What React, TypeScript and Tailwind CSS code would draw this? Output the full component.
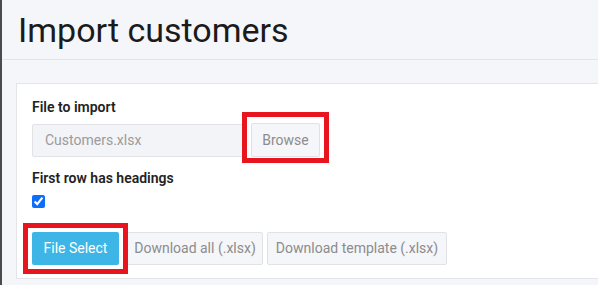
import React, { useState } from "react";

const Marked: React.FC<{
  children: React.ReactNode;
  className?: string;
  frame?: string;
}> = ({ children, className = "", frame = "-top-[9px] -bottom-[9px]" }) => (
  <div className={`relative ${className}`}>
    {children}
    {/* red annotation frame */}
    <div
      className={`pointer-events-none absolute border-[5px] border-[#e8141e] -left-[9px] -right-[9px] ${frame}`}
    />
  </div>
);

const App: React.FC = () => {
  const [headings, setHeadings] = useState(true);

  return (
    <div
      className="flex h-[285px] w-[602px] overflow-hidden bg-white"
      style={{ fontFamily: "Roboto, 'Liberation Sans', sans-serif" }}
    >
      <div className="w-[2px] shrink-0 bg-[#4b4b4b]" />
      <div className="flex w-[596px] flex-col bg-[#f5f6fa]">
        <div className="h-[60px] shrink-0 border-b border-[#e3e4e8] pl-[16px] pt-[8px]">
          <h1 className="text-[34px] leading-[44px] text-[#1b1b1b]">Import customers</h1>
        </div>

        <div className="pl-[14px] pt-[23px]">
          <div className="h-[196px] border border-r-0 border-[#e4e5e9] bg-white pl-[15px] pt-[13px]">
            <label className="block text-[14px] font-semibold leading-[20px] text-[#222]">
              File to import
            </label>
            <div className="mt-[6px] flex items-center">
              <div className="flex h-[33px] w-[211px] items-center rounded-[2px] border border-[#e1e2e6] bg-[#f3f4f7] px-[12px] text-[14px] text-[#9b9b9b]">
                Customers.xlsx
              </div>
              <Marked className="ml-[8px]" frame="-top-[11px] -bottom-[6px]">
                <button className="h-[34px] w-[69px] rounded-[2px] border border-[#e1e2e6] bg-[#f5f6f9] text-[14px] text-[#8c8c8c]">
                  Browse
                </button>
              </Marked>
            </div>

            <label className="mt-[11px] block text-[14px] font-semibold leading-[20px] text-[#222]">
              First row has headings
            </label>
            <div className="mt-[7px] flex h-[13px]">
              <input
                type="checkbox"
                checked={headings}
                onChange={(e) => setHeadings(e.currentTarget.checked)}
                className="m-0 h-[13px] w-[13px] accent-[#0d6efd]"
              />
            </div>

            <div className="mt-[24px] flex items-center">
              <Marked>
                <button className="h-[33px] w-[87px] rounded-[2px] bg-[#3db5e6] text-[14px] text-white">
                  File Select
                </button>
              </Marked>
              <button className="ml-[8px] h-[33px] w-[136px] rounded-[2px] border border-[#e1e2e6] bg-[#f5f6f9] text-[14px] text-[#8c8c8c]">
                Download all (.xlsx)
              </button>
              <button className="ml-[4px] h-[33px] w-[180px] rounded-[2px] border border-[#e1e2e6] bg-[#f5f6f9] text-[14px] text-[#8c8c8c]">
                Download template (.xlsx)
              </button>
            </div>
          </div>
        </div>
      </div>
    </div>
  );
};

export default App;
